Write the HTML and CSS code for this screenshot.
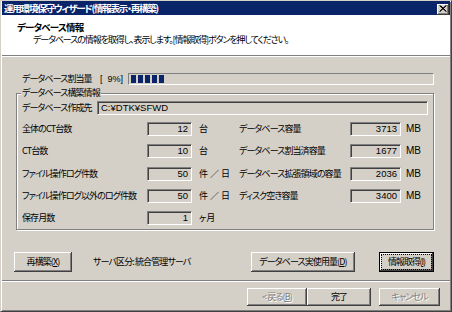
FILE: index.html
```html
<!DOCTYPE html>
<html lang="ja">
<head>
<meta charset="utf-8">
<link rel="stylesheet" href="styles.css">
</head>
<body>
<div class="window">
  <div class="titlebar">
    <span class="title">運用環境保守ウィザード(情報表示・再構築)</span>
    <span class="close"><svg width="8" height="7" viewBox="0 0 8 7"><path d="M0.5 0.5 L7 6.5 M1.5 0.5 L7.5 6.5 M7 0.5 L0.5 6.5 M7.5 0.5 L1 6.5" stroke="#000" stroke-width="1" fill="none"/></svg></span>
  </div>
  <div class="header">
    <div class="h-title">データベース情報</div>
    <div class="h-sub">データベースの情報を取得し、表示します。[情報取得]ボタンを押してください。</div>
  </div>
  <div class="etch"></div>
  <div class="content">
    <div class="quota">
      <span class="quota-label">データベース割当量</span>
      <span class="quota-pct">[  9%]</span>
      <div class="progress">
        <span class="block"></span><span class="block"></span><span class="block"></span><span class="block"></span><span class="block"></span>
      </div>
    </div>
    <fieldset class="group">
      <legend>データベース構築情報</legend>
      <div class="path-row">
        <span class="path-label">データベース作成先</span>
        <div class="tb tb-left">C:¥DTK¥SFWD</div>
      </div>
      <div class="grid">
        <span class="lbl">全体のCT台数</span>
        <div class="tb">12</div>
        <span class="unit">台</span>
        <span class="lbl">データベース容量</span>
        <div class="tb">3713</div>
        <span class="unit-mb">MB</span>

        <span class="lbl">CT台数</span>
        <div class="tb">10</div>
        <span class="unit">台</span>
        <span class="lbl">データベース割当済容量</span>
        <div class="tb">1677</div>
        <span class="unit-mb">MB</span>

        <span class="lbl">ファイル操作ログ件数</span>
        <div class="tb">50</div>
        <span class="unit">件 ／ 日</span>
        <span class="lbl">データベース拡張領域の容量</span>
        <div class="tb">2036</div>
        <span class="unit-mb">MB</span>

        <span class="lbl">ファイル操作ログ以外のログ件数</span>
        <div class="tb">50</div>
        <span class="unit">件 ／ 日</span>
        <span class="lbl">ディスク空き容量</span>
        <div class="tb">3400</div>
        <span class="unit-mb">MB</span>

        <span class="lbl">保存月数</span>
        <div class="tb">1</div>
        <span class="unit">ヶ月</span>
      </div>
    </fieldset>
    <div class="actions">
      <button class="btn btn-rebuild">再構築(<u>X</u>)</button>
      <span class="server">サーバ区分: 統合管理サーバ</span>
      <button class="btn btn-usage">データベース実使用量(<u>D</u>)</button>
      <button class="btn btn-fetch default">情報取得(<u>I</u>)</button>
    </div>
  </div>
  <div class="etch"></div>
  <div class="footer">
    <button class="btn btn-back" disabled>&lt; 戻る(<u>B</u>)</button>
    <button class="btn btn-finish">完了</button>
    <button class="btn btn-cancel" disabled>キャンセル</button>
  </div>
</div>
</body>
</html>
```
FILE: styles.css
```css
* { box-sizing: border-box; }
html, body { margin: 0; padding: 0; }
body {
  width: 452px;
  height: 312px;
  overflow: hidden;
  font-family: "Noto Sans CJK JP", "Noto Sans", sans-serif;
  font-size: 9px;
  line-height: 12px;
  color: #000;
  font-feature-settings: "palt";
  letter-spacing: -0.9px;
}
.window {
  width: 452px;
  height: 312px;
  background: #d4d0c8;
  border: 1px solid;
  border-color: #d4d0c8 #404040 #404040 #d4d0c8;
  box-shadow: inset 1px 1px #fff, inset -1px -1px #808080;
  padding: 0 1px 1px 1px;
  display: flex;
  flex-direction: column;
}
.titlebar {
  height: 14px;
  flex: none;
  background: #0a246a;
  display: flex;
  align-items: center;
  justify-content: space-between;
  padding: 0 1px 0 2px;
}
.title {
  color: #fff;
  font-weight: bold;
  font-size: 9.5px;
  letter-spacing: -1.2px;
}
.close {
  width: 12px;
  height: 11px;
  margin-top: 2px;
  background: #d4d0c8;
  box-shadow: inset -1px -1px #404040, inset 1px 1px #fff, inset -2px -2px #808080;
  display: flex;
  align-items: center;
  justify-content: center;
  padding: 0 1px 1px 0;
}
.close svg { display: block; }
.header {
  height: 40px;
  flex: none;
  background: #fff;
  padding: 6px 0 0 15px;
}
.h-title { font-weight: bold; font-size: 9.5px; letter-spacing: -0.8px; line-height: 12px; }
.h-sub { padding-left: 16px; letter-spacing: -1.1px; margin-top: 1px; line-height: 12px; }
.etch {
  height: 2px;
  flex: none;
  border-top: 1px solid #808080;
  border-bottom: 1px solid #fff;
}
.content {
  flex: 1;
  padding: 16px 16px 0 14px;
}
.quota {
  display: flex;
  align-items: center;
  height: 12px;
}
.quota-label { width: 84px; padding-left: 6px; white-space: nowrap; }
.quota-pct { width: 28px; white-space: pre; font-family: "Liberation Sans", sans-serif; letter-spacing: 0; }
.progress {
  flex: 1;
  height: 12px;
  border: 1px solid;
  border-color: #808080 #fff #fff #808080;
  padding: 1px 2px;
  display: flex;
  gap: 2px;
}
.block { width: 5px; height: 8px; background: #0a246a; }
.group {
  margin: 2px 0 0 0;
  padding: 2px 5px 4px 5px;
  border: 1px solid #808080;
  box-shadow: inset 1px 1px #fff, 1px 1px #fff;
  min-width: 0;
}
.group legend {
  padding: 0 1px;
  margin-left: -1px;
  line-height: 12px;
  background: #d4d0c8;
}
.path-row {
  display: flex;
  align-items: center;
  height: 14px;
}
.path-label { width: 75px; white-space: nowrap; }
.tb {
  height: 14px;
  background: #d4d0c8;
  border: 1px solid;
  border-color: #808080 #fff #fff #808080;
  box-shadow: inset 1px 1px #404040, inset -1px -1px #d4d0c8;
  text-align: right;
  padding: 0 3px 0 2px;
  line-height: 12px;
  font-family: "Liberation Sans", "Noto Sans CJK JP", sans-serif;
  font-size: 9.5px;
  letter-spacing: 0;
}
.tb-left { flex: 1; text-align: left; padding-left: 3px; }
.grid {
  display: grid;
  grid-template-columns: 125px 45px 47px 111px 51px auto;
  grid-auto-rows: 14px;
  row-gap: 8.25px;
  margin-top: 7px;
  align-items: center;
}
.lbl { white-space: nowrap; }
.unit { padding-left: 7px; white-space: nowrap; letter-spacing: 0; }
.unit-mb { padding-left: 5px; font-family: "Liberation Sans", sans-serif; letter-spacing: 0; font-size: 10px; }
.actions {
  display: flex;
  align-items: center;
  margin-top: 22px;
  height: 20px;
}
.btn {
  font: inherit;
  letter-spacing: inherit;
  color: #000;
  background: #d4d0c8;
  border: none;
  box-shadow: inset -1px -1px #404040, inset 1px 1px #fff, inset -2px -2px #808080;
  padding: 0;
  margin: 0;
  height: 20px;
  white-space: nowrap;
}
.btn u { text-underline-offset: 1px; }
.btn:disabled { color: #808080; text-shadow: 1px 1px #fff; }
.btn-rebuild { width: 58px; margin-left: -2px; }
.server { margin-left: 21px; }
.btn-usage { width: 104px; margin-left: auto; }
.btn-fetch { width: 55px; margin-left: 24px; letter-spacing: -1.1px; }
.default {
  border: 1px solid #000;
  outline: 1px dotted #000;
  outline-offset: -3px;
}
.footer {
  height: 28px;
  flex: none;
  display: flex;
  justify-content: flex-end;
  padding: 6px 10px 0 0;
}
.footer .btn { height: 18px; }
.btn-back { width: 60px; }
.btn-finish { width: 64px; }
.btn-cancel { width: 61px; margin-left: 8px; }
```
